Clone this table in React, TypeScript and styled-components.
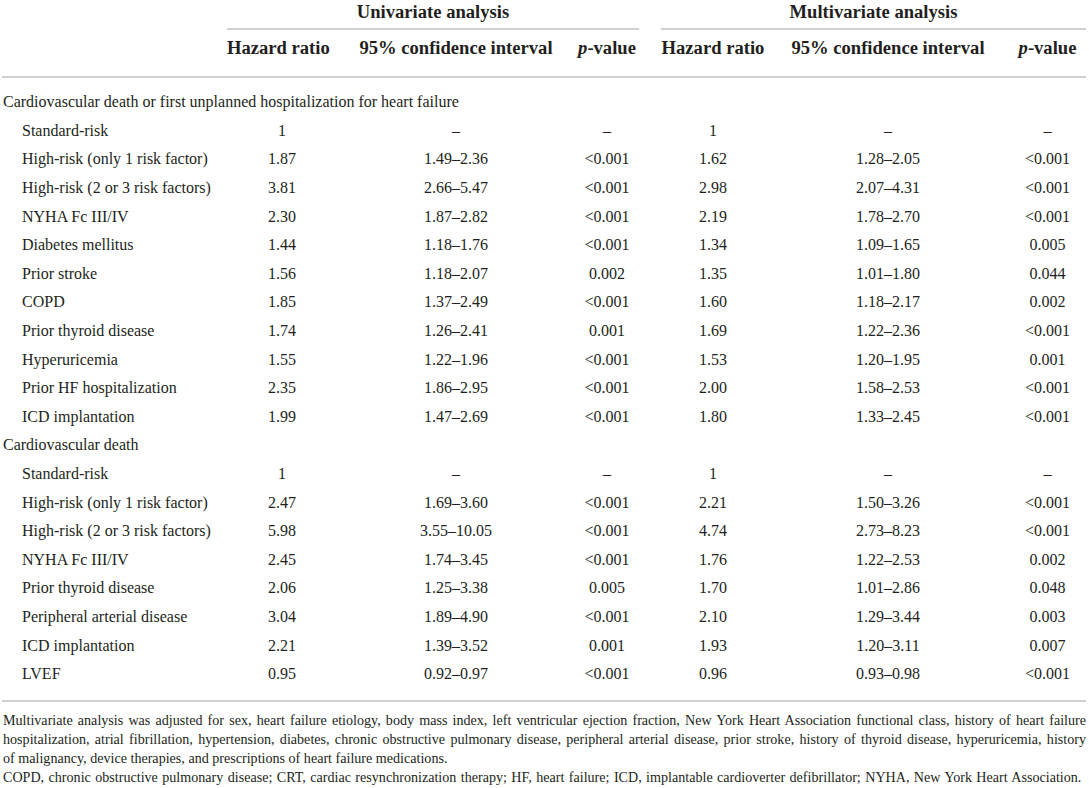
import React from 'react';
import styled, { createGlobalStyle } from 'styled-components';

const GlobalStyle = createGlobalStyle`
  body {
    margin: 0;
    background: #fff;
    color: #231f20;
    font-family: 'Liberation Serif', 'Times New Roman', serif;
  }
`;

const COLUMNS = '225px 110px 238px 64px 20px 108px 242px 77px';

const TableWrap = styled.div`
  width: 1084px;
  margin-left: 2px;
`;

const GroupHeader = styled.div`
  display: grid;
  grid-template-columns: 225px 412px 22px 425px;
  font-size: 18.6px;
  font-weight: bold;
`;

const GroupTitle = styled.div<{ $col: number }>`
  grid-column: ${(p) => p.$col};
  text-align: center;
  line-height: 24px;
  padding-bottom: 4px;
  border-bottom: 2px solid #d0d0d0;
`;

const ColumnHeader = styled.div`
  display: grid;
  grid-template-columns: ${COLUMNS};
  font-size: 18.6px;
  font-weight: bold;
  line-height: 24px;
  padding: 6px 0 16px;
  border-bottom: 2px solid #d0d0d0;
`;

const HeadCell = styled.div<{ $shift?: number }>`
  text-align: center;
  white-space: nowrap;
  padding-right: ${(p) => p.$shift || 0}px;

  i {
    font-style: italic;
  }
`;

const Body = styled.div`
  padding: 10px 0 12px;
  border-bottom: 2px solid #d0d0d0;
  font-size: 16px;
`;

const Row = styled.div`
  display: grid;
  grid-template-columns: ${COLUMNS};
  height: 28.6px;
  align-items: center;
  line-height: 20px;
`;

const Label = styled.div<{ $indent?: boolean }>`
  padding-left: ${(p) => (p.$indent ? 20 : 1)}px;
  white-space: nowrap;
`;

const SectionLabel = styled(Label)`
  grid-column: 1 / -1;
`;

const Cell = styled.div`
  text-align: center;
  white-space: nowrap;
`;

const Notes = styled.div`
  padding: 9px 0 0 1px;
  font-size: 14.1px;
  line-height: 18.7px;
`;

const Note = styled.p<{ $loose?: boolean }>`
  margin: 0;
  text-align: justify;
  word-spacing: ${(p) => (p.$loose ? '0.9px' : 'normal')};
`;

type Item = [string, string, string, string, string, string, string];

const sections: { title: string; rows: Item[] }[] = [
  {
    title: 'Cardiovascular death or first unplanned hospitalization for heart failure',
    rows: [
      ['Standard-risk', '1', '–', '–', '1', '–', '–'],
      ['High-risk (only 1 risk factor)', '1.87', '1.49–2.36', '<0.001', '1.62', '1.28–2.05', '<0.001'],
      ['High-risk (2 or 3 risk factors)', '3.81', '2.66–5.47', '<0.001', '2.98', '2.07–4.31', '<0.001'],
      ['NYHA Fc III/IV', '2.30', '1.87–2.82', '<0.001', '2.19', '1.78–2.70', '<0.001'],
      ['Diabetes mellitus', '1.44', '1.18–1.76', '<0.001', '1.34', '1.09–1.65', '0.005'],
      ['Prior stroke', '1.56', '1.18–2.07', '0.002', '1.35', '1.01–1.80', '0.044'],
      ['COPD', '1.85', '1.37–2.49', '<0.001', '1.60', '1.18–2.17', '0.002'],
      ['Prior thyroid disease', '1.74', '1.26–2.41', '0.001', '1.69', '1.22–2.36', '<0.001'],
      ['Hyperuricemia', '1.55', '1.22–1.96', '<0.001', '1.53', '1.20–1.95', '0.001'],
      ['Prior HF hospitalization', '2.35', '1.86–2.95', '<0.001', '2.00', '1.58–2.53', '<0.001'],
      ['ICD implantation', '1.99', '1.47–2.69', '<0.001', '1.80', '1.33–2.45', '<0.001'],
    ],
  },
  {
    title: 'Cardiovascular death',
    rows: [
      ['Standard-risk', '1', '–', '–', '1', '–', '–'],
      ['High-risk (only 1 risk factor)', '2.47', '1.69–3.60', '<0.001', '2.21', '1.50–3.26', '<0.001'],
      ['High-risk (2 or 3 risk factors)', '5.98', '3.55–10.05', '<0.001', '4.74', '2.73–8.23', '<0.001'],
      ['NYHA Fc III/IV', '2.45', '1.74–3.45', '<0.001', '1.76', '1.22–2.53', '0.002'],
      ['Prior thyroid disease', '2.06', '1.25–3.38', '0.005', '1.70', '1.01–2.86', '0.048'],
      ['Peripheral arterial disease', '3.04', '1.89–4.90', '<0.001', '2.10', '1.29–3.44', '0.003'],
      ['ICD implantation', '2.21', '1.39–3.52', '0.001', '1.93', '1.20–3.11', '0.007'],
      ['LVEF', '0.95', '0.92–0.97', '<0.001', '0.96', '0.93–0.98', '<0.001'],
    ],
  },
];

const App: React.FC = () => {
  return (
    <>
      <GlobalStyle />
      <TableWrap>
        <GroupHeader>
          <GroupTitle $col={2}>Univariate analysis</GroupTitle>
          <GroupTitle $col={4}>Multivariate analysis</GroupTitle>
        </GroupHeader>
        <ColumnHeader>
          <div />
          <HeadCell $shift={12}>Hazard ratio</HeadCell>
          <HeadCell>95% confidence interval</HeadCell>
          <HeadCell>
            <i>p</i>-value
          </HeadCell>
          <div />
          <HeadCell>Hazard ratio</HeadCell>
          <HeadCell>95% confidence interval</HeadCell>
          <HeadCell>
            <i>p</i>-value
          </HeadCell>
        </ColumnHeader>
        <Body>
          {sections.map((section) => (
            <React.Fragment key={section.title}>
              <Row>
                <SectionLabel>{section.title}</SectionLabel>
              </Row>
              {section.rows.map((row, idx) => (
                <Row key={idx}>
                  <Label $indent>{row[0]}</Label>
                  <Cell>{row[1]}</Cell>
                  <Cell>{row[2]}</Cell>
                  <Cell>{row[3]}</Cell>
                  <div />
                  <Cell>{row[4]}</Cell>
                  <Cell>{row[5]}</Cell>
                  <Cell>{row[6]}</Cell>
                </Row>
              ))}
            </React.Fragment>
          ))}
        </Body>
        <Notes>
          <Note>
            Multivariate analysis was adjusted for sex, heart failure etiology, body mass index, left ventricular
            ejection fraction, New York Heart Association functional class, history of heart failure hospitalization,
            atrial fibrillation, hypertension, diabetes, chronic obstructive pulmonary disease, peripheral arterial
            disease, prior stroke, history of thyroid disease, hyperuricemia, history of{'\u00a0'}malignancy, device
            therapies, and prescriptions of heart failure medications.
          </Note>
          <Note $loose>
            COPD, chronic obstructive pulmonary disease; CRT, cardiac resynchronization therapy; HF, heart failure; ICD,
            implantable cardioverter defibrillator; NYHA, New York Heart Association.
          </Note>
        </Notes>
      </TableWrap>
    </>
  );
};

export default App;
